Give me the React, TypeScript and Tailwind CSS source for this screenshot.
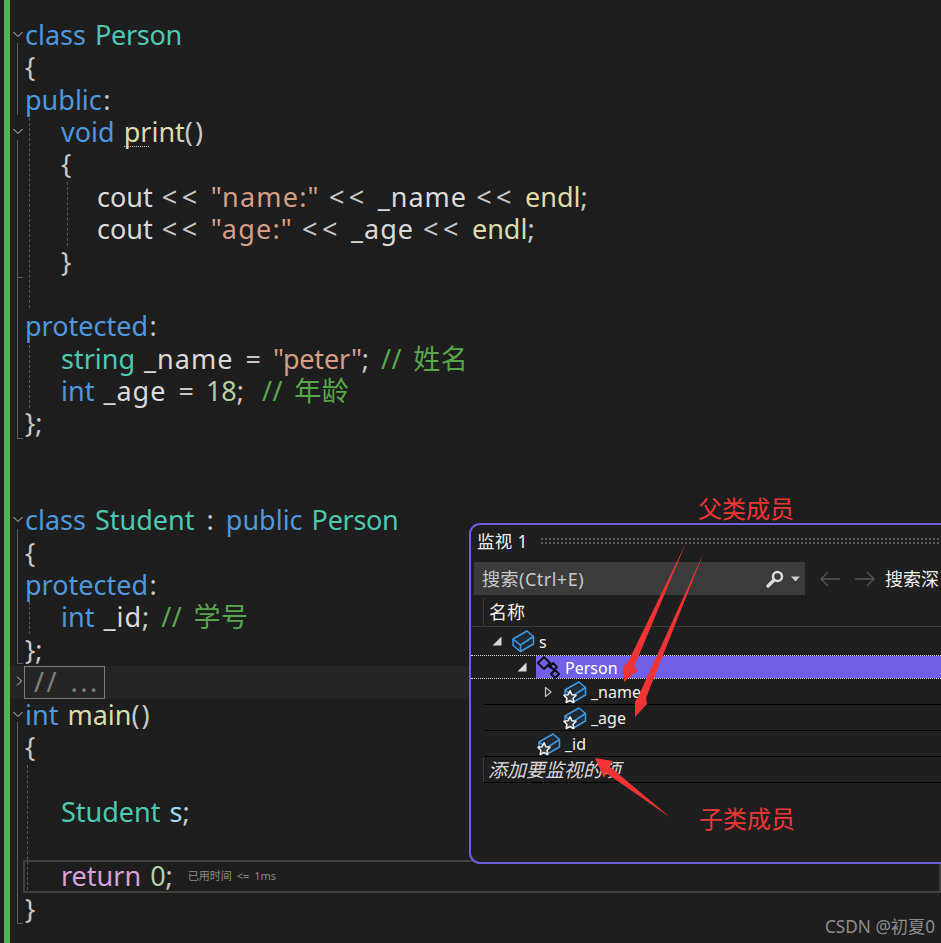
import React from "react";

type T = [string, string];
const K = "text-[#4f97dc]", C = "text-[#4ec9b0]", CP = "text-[#4ec9b0] tracking-[-0.3px]", P = "text-[#c8c8c8]", F = "text-[#dcdcaa]", S = "text-[#d69d85] tracking-[1.200px]", S2 = "text-[#d69d85] tracking-[-0.200px]", G = "text-[#57a64a] tracking-[0.400px] [word-spacing:4px]", V = "text-[#dadada]", U = "text-[#dadada] tracking-[1px]", N = "text-[#b5cea8]", R = "text-[#d8a0df]", M = "text-[#9cdcfe]", O = "text-[#c8c8c8] tracking-[4.500px]", W = "text-[#c8c8c8] [word-spacing:5px]", Pa = "text-[#c8c8c8] tracking-[2px]", Co = "text-[#c8c8c8] ml-[1.500px]";

type Line = { ind?: number; t?: T[]; fold?: boolean };
const lines: Line[] = [
  { fold: true, t: [["class ", K], ["Person", CP]] },
  { t: [["{", P]] },
  { t: [["public", K], [":", Co]] },
  { ind: 1, fold: true, t: [["void ", K], ["print", F], ["()", Pa]] },
  { ind: 1, t: [["{", P]] },
  { ind: 2, t: [["cout ", V], ["<<", O], [" ", P], ['"name:"', S], [" ", P], ["<<", O], [" ", P], ["_name", U], [" ", P], ["<<", O], [" ", P], ["endl", F], [";", P]] },
  { ind: 2, t: [["cout ", V], ["<<", O], [" ", P], ['"age:"', S], [" ", P], ["<<", O], [" ", P], ["_age", U], [" ", P], ["<<", O], [" ", P], ["endl", F], [";", P]] },
  { ind: 1, t: [["}", P]] },
  {},
  { t: [["protected", K], [":", Co]] },
  { ind: 1, t: [["string ", C], ["_name", U], [" = ", W], ['"peter"', S2], ["; ", W], ["// 姓名", G]] },
  { ind: 1, t: [["int ", K], ["_age", U], [" = ", W], ["18", N], [";  ", P], ["// 年龄", G]] },
  { t: [["};", P]] },
  {},
  {},
  { fold: true, t: [["class ", K], ["Student", C], [" : ", W], ["public ", K], ["Person", CP]] },
  { t: [["{", P]] },
  { t: [["protected", K], [":", Co]] },
  { ind: 1, t: [["int ", K], ["_id", U], ["; ", W], ["// 学号", G]] },
  { t: [["};", P]] },
];
const lines2: Line[] = [
  { fold: true, t: [["int ", K], ["main", F], ["()", Pa]] },
  { t: [["{", P]] },
  {},
  { ind: 1, t: [["Student ", C], ["s", M], [";", P]] },
  {},
];

const Chevron = ({ open }: { open: boolean }) => (
  <svg className="absolute left-[3px] top-[10px] h-[10px] w-[10px]" viewBox="0 0 10 10" fill="none" stroke="#c4c4c4" strokeWidth="1">
    {open ? <path d="M.5 3l4.500 4.500L9.500 3" /> : <path d="M3 .5l4.500 4.500L3 9.500" />}
  </svg>
);

const CodeLine = ({ l }: { l: Line }) => (
  <div className="relative h-[32.36px] whitespace-pre pl-[15px] leading-[32.36px]">
    {l.fold && <Chevron open />}
    <span className={l.ind === 2 ? "pl-[72px]" : l.ind === 1 ? "pl-[36px]" : ""}>
      {l.t?.map(([s, c], i) => <span key={i} className={c}>{s}</span>)}
    </span>
  </div>
);

const Box = ({ star }: { star?: boolean }) => (
  <svg className="h-[22px] w-[22px] shrink-0 overflow-visible" viewBox="0 0 22 22" fill="none">
    <path d="M1 9L15 1l6.500 5.500V14L8.500 21.500 1 15.500z" fill="#1f2a35" stroke="#3f9ae2" strokeWidth="1.500" strokeLinejoin="round" />
    <path d="M1 9l7.500 6 13-8.500M8.500 15v6.500" stroke="#3f9ae2" strokeWidth="1.500" />
    {star && <path d="M6 9.800l1.900 3.900 4.200.6-3 3 .7 4.200L6 19.500l-3.800 2 .7-4.200-3-3 4.200-.6z" fill="#3a3a3a" stroke="#eeeeee" strokeWidth="1.600" strokeLinejoin="round" />}
  </svg>
);

const Tri = ({ hollow }: { hollow?: boolean }) => (
  <svg className="h-[10px] w-[10px] shrink-0" viewBox="0 0 10 10">
    {hollow ? <path d="M2.500 .5l5.500 4.500-5.500 4.500z" fill="none" stroke="#c0c0c0" strokeWidth="1.200" /> : <path d="M9.500 .5v9h-9z" fill="#d8d8d8" />}
  </svg>
);

export default function App() {
  return (
    <div className="relative flex h-[943px] w-[941px] overflow-hidden bg-[#1e1e1e] font-['Noto_Sans','Noto_Sans_CJK_SC',sans-serif] text-[27px] [word-spacing:2px]">
      <div className="ml-[4px] h-full w-[6px] shrink-0 bg-[#52b257]" />
      <div className="relative grow pt-[19px]">
        {lines.map((l, i) => <CodeLine key={i} l={l} />)}
        <div className="relative flex h-[32.36px] bg-[#252525]">
          <svg className="absolute left-[4px] top-[10px] h-[10px] w-[10px]" viewBox="0 0 10 10" fill="none" stroke="#c4c4c4"><path d="M3 .5l4.500 4.500L3 9.500" /></svg>
          <div className="ml-[14px] flex h-[33px] w-[81px] items-center whitespace-pre border border-[#7c7c7c] pl-[9px] tracking-[2.500px] text-[#7f7f7f]">// ...</div>
        </div>
        {lines2.map((l, i) => <CodeLine key={i} l={l} />)}
        <div className="relative ml-[13px] flex h-[32.36px] items-center whitespace-pre border-2 border-[#3f3f3f] pl-[36px]">
          <span className={R}>return </span><span className={N}>0</span><span className={P}>;</span>
          <span className="ml-[15px] text-[11px] text-[#8a8a8a]">已用时间 &lt;= 1ms</span>
        </div>
        <CodeLine l={{ t: [["}", P]] }} />

        {/* outlining margin and indent guides */}
        <div className="absolute left-[7px] top-[43px] h-[72px] w-px bg-[#5e5e5e]" />
        <div className="absolute left-[7px] top-[140px] h-[138px] w-[6px] border-b border-l border-[#5e5e5e]" />
        <div className="absolute left-[7px] top-[278px] h-[161px] w-[6px] border-b border-l border-[#5e5e5e]" />
        <div className="absolute left-[7px] top-[529px] h-[135px] w-[6px] border-b border-l border-[#5e5e5e]" />
        <div className="absolute left-[7px] top-[722px] h-[202px] w-[6px] border-b border-l border-[#5e5e5e]" />
        <div className="absolute left-[19px] top-[118px] h-[190px] border-l border-dashed border-[#5a5a5a]" />
        <div className="absolute left-[19px] top-[340px] h-[68px] border-l border-dashed border-[#5a5a5a]" />
        <div className="absolute left-[19px] top-[602px] h-[32px] border-l border-dashed border-[#5a5a5a]" />
        <div className="absolute left-[57px] top-[182px] h-[64px] border-l border-dashed border-[#5a5a5a]" />
        <div className="absolute left-[17px] top-[765px] h-[125px] border-l border-dashed border-[#5a5a5a]" />
        <div className="absolute left-[114px] top-[146px] w-[25px] border-b border-dotted border-[#c8c8c8]" />
      </div>

      {/* Watch window */}
      <div className="absolute left-[469px] top-[523px] flex h-[341px] w-[520px] flex-col rounded-l-[11px] border-2 border-[#6c5fd8] bg-[#1f1f1f] text-[16px] text-[#f0f0f0] [word-spacing:0]">
        <div className="flex h-[35px] shrink-0 items-center pb-[3px] pl-[6px]">
          <span className="whitespace-pre text-[17.500px] tracking-[0.300px]">监视 1</span>
          <div className="ml-[12px] h-[8px] w-[420px] bg-[radial-gradient(#5a5a5a_1px,transparent_1px)] bg-[length:4px_4px]" />
        </div>
        <div className="flex h-[38px] shrink-0 items-start pl-[3px] pt-[2px]">
          <div className="flex h-[33px] w-[331px] items-center justify-between bg-[#3b3b3b] pl-[8px] pr-[5px] text-[#c8c8c8]">
            <span className="pt-[1px] text-[18px] tracking-[0.500px]">搜索(Ctrl+E)</span>
            <span className="flex items-center gap-[6px]">
              <svg className="h-[20px] w-[20px]" viewBox="0 0 20 20" fill="none"><circle cx="12.500" cy="7.500" r="4.500" stroke="#d8d8d8" strokeWidth="2.600" /><path d="M9 11l-6 6" stroke="#d8d8d8" strokeWidth="3.400" strokeLinecap="round" /></svg>
              <svg className="h-[6px] w-[9px]" viewBox="0 0 9 6"><path d="M0 .5h9L4.500 5.500z" fill="#d0d0d0" /></svg>
            </span>
          </div>
          <div className="flex h-[33px] items-center">
            <svg className="ml-[14px] h-[18px] w-[22px]" viewBox="0 0 22 18" fill="none" stroke="#555" strokeWidth="1.400"><path d="M21 9H2M9 2L2 9l7 7" /></svg>
            <svg className="ml-[13px] h-[18px] w-[22px]" viewBox="0 0 22 18" fill="none" stroke="#555" strokeWidth="1.400"><path d="M1 9h19M13 2l7 7-7 7" /></svg>
            <span className="ml-[9px] whitespace-nowrap pt-[1px] text-[18px]">搜索深</span>
          </div>
        </div>
        <div className="h-[29px] shrink-0 border-b border-[#3c3c3c] pl-[12px]">
          <div className="flex h-full items-center border-l border-[#3c3c3c] pl-[5px] pt-[1px] text-[18px]">名称</div>
        </div>
        <div className="flex h-[28px] shrink-0 items-center pl-[21px]">
          <Tri />
          <span className="ml-[10px]"><Box /></span>
          <span className="ml-[5px] pt-[1px]">s</span>
        </div>
        <div className="flex h-[24px] shrink-0 items-stretch border-y border-dotted border-[#e0e0e0]">
          <div className="flex w-[65px] shrink-0 items-center justify-end pr-[9px]"><Tri /></div>
          <div className="flex grow items-center bg-[#7160e8] pl-[1px] text-white">
            <svg className="h-[23px] w-[24px] shrink-0" viewBox="0 0 24 23" fill="none" stroke="#111" strokeWidth="2" strokeLinejoin="round">
              <path d="M1 7L7 1l6 6-6 6z" />
              <path d="M13 10l3-3 4 4-3 3z" />
              <path d="M14 18l4-4 4 4-4 4z" />
              <path d="M11 9l3 3M16.500 13.500l1 1" />
            </svg>
            <span className="ml-[4px] pt-[1px]">Person</span>
          </div>
        </div>
        <div className="ml-[13px] flex h-[26px] shrink-0 items-center border-b border-black pl-[59px]">
          <Tri hollow />
          <span className="ml-[11px]"><Box star /></span>
          <span className="ml-[5px] pt-[1px]">_name</span>
        </div>
        <div className="ml-[13px] flex h-[26px] shrink-0 items-center border-b border-black pl-[80px]">
          <Box star />
          <span className="ml-[5px] pt-[1px]">_age</span>
        </div>
        <div className="ml-[13px] flex h-[26px] shrink-0 items-center border-b border-black pl-[54px]">
          <Box star />
          <span className="ml-[5px] pt-[1px]">_id</span>
        </div>
        <div className="ml-[12px] h-[26px] shrink-0 border-b border-black">
          <div className="flex h-full items-center border-l border-[#3c3c3c] pl-[4px] pt-[1px] text-[19px] italic text-[#d8d8d8]">添加要监视的项</div>
        </div>
      </div>

      {/* annotation arrows */}
      <svg className="absolute left-0 top-0 h-[943px] w-[941px]" viewBox="0 0 941 943">
        <path d="M686 543L634 667L638 670L624 682L623 667L628 662Z" fill="#f23333" />
        <path d="M704 552L646 698L647 704L635 717L635 702L638 697Z" fill="#f23333" />
        <path d="M671 818L609 766L613 761L595 758L604 778L606 773Z" fill="#f23333" />
      </svg>
      <div className="absolute left-[698px] top-[492px] text-[24px] leading-[34px] text-[#f03535] [word-spacing:0]">父类成员</div>
      <div className="absolute left-[699px] top-[802px] text-[24px] leading-[34px] text-[#f03535] [word-spacing:0]">子类成员</div>
      <div className="absolute left-[825px] top-[915px] text-[17.200px] leading-[24px] text-[#8c8c8c] [word-spacing:0]">CSDN @初夏0</div>
    </div>
  );
}
